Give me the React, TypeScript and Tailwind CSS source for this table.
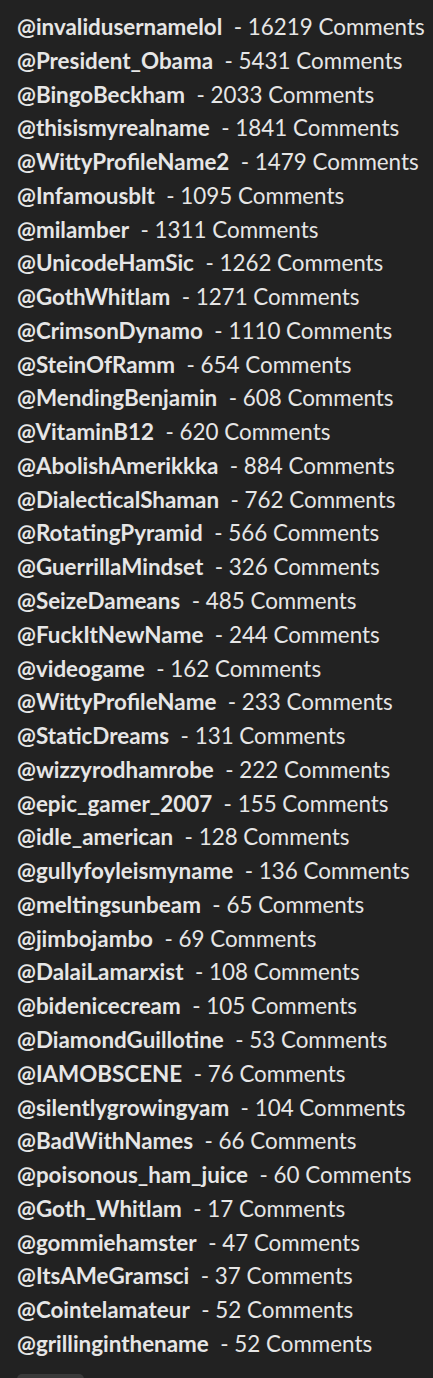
const USERS: [string, number][] = [
  ['invalidusernamelol', 16219],
  ['President_Obama', 5431],
  ['BingoBeckham', 2033],
  ['thisismyrealname', 1841],
  ['WittyProfileName2', 1479],
  ['Infamousblt', 1095],
  ['milamber', 1311],
  ['UnicodeHamSic', 1262],
  ['GothWhitlam', 1271],
  ['CrimsonDynamo', 1110],
  ['SteinOfRamm', 654],
  ['MendingBenjamin', 608],
  ['VitaminB12', 620],
  ['AbolishAmerikkka', 884],
  ['DialecticalShaman', 762],
  ['RotatingPyramid', 566],
  ['GuerrillaMindset', 326],
  ['SeizeDameans', 485],
  ['FuckItNewName', 244],
  ['videogame', 162],
  ['WittyProfileName', 233],
  ['StaticDreams', 131],
  ['wizzyrodhamrobe', 222],
  ['epic_gamer_2007', 155],
  ['idle_american', 128],
  ['gullyfoyleismyname', 136],
  ['meltingsunbeam', 65],
  ['jimbojambo', 69],
  ['DalaiLamarxist', 108],
  ['bidenicecream', 105],
  ['DiamondGuillotine', 53],
  ['IAMOBSCENE', 76],
  ['silentlygrowingyam', 104],
  ['BadWithNames', 66],
  ['poisonous_ham_juice', 60],
  ['Goth_Whitlam', 17],
  ['gommiehamster', 47],
  ['ItsAMeGramsci', 37],
  ['Cointelamateur', 52],
  ['grillinginthename', 52],
];

export default function App() {
  return (
    <div className="min-h-[1378px] bg-[#222222] px-[17px] pt-[10px] font-['Lato',sans-serif] text-[#e6e6e6]">
      <ul className="flex flex-col">
        {USERS.map(([name, count]) => (
          <li key={name} className="text-[22.4px] leading-[33.77px] whitespace-pre">
            <span className="font-bold">@{name}</span>
            {`  - ${count} Comments`}
          </li>
        ))}
      </ul>
      <button className="mt-[13px] h-[30px] w-[67px] rounded-[5px] bg-[#3a3a3a]" type="button" />
    </div>
  );
}
